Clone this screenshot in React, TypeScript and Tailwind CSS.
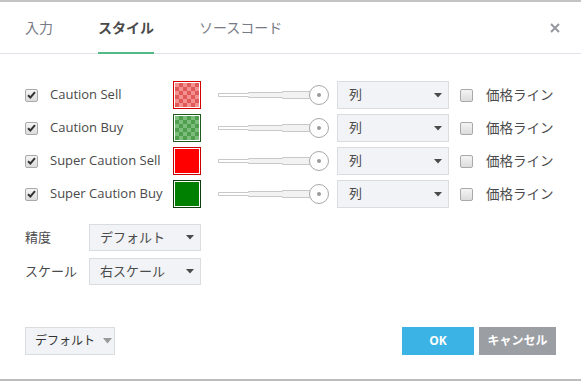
const rows = [
  { name: "Caution Sell", swatch: "border-[#d40000] bg-[repeating-conic-gradient(#e05a5a_0_25%,#f59090_0_50%)] bg-[length:8px_8px]" },
  { name: "Caution Buy", swatch: "border-[#1d5c1d] bg-[repeating-conic-gradient(#4f9f4f_0_25%,#7cbc7c_0_50%)] bg-[length:8px_8px]" },
  { name: "Super Caution Sell", swatch: "border-[#c80000] bg-[#ff0000]" },
  { name: "Super Caution Buy", swatch: "border-[#0d3d0d] bg-[#008000]" },
];

const Check = ({ on }: { on?: boolean }) => (
  <div className="w-[13px] h-[13px] rounded-[2px] border border-[#a9a9a9] bg-gradient-to-b from-[#f4f4f4] to-[#dcdcdc] flex items-center justify-center">
    {on && (
      <svg width="9" height="8" viewBox="0 0 9 8">
        <path d="M1 4.2 L3.4 6.5 L8 1.2" fill="none" stroke="#333" strokeWidth="2" />
      </svg>
    )}
  </div>
);

const Caret = () => (
  <svg width="8" height="5" viewBox="0 0 8 5">
    <path d="M0 0 H8 L4 4.5 Z" fill="#4a4a4a" />
  </svg>
);

const Slider = () => (
  <svg width="112" height="24" viewBox="0 0 112 24">
    <path
      d="M0.5 10.5 H30.5 V9.5 H64.5 V8.5 H92 M0.5 13.5 H30.5 V14.5 H64.5 V15.5 H92 M0.5 10.5 V13.5"
      fill="none"
      stroke="#c8c8c8"
    />
    <rect x="31" y="10" width="34" height="4" fill="#f2f2f2" />
    <rect x="65" y="9" width="28" height="6" fill="#f2f2f2" />
    <circle cx="101" cy="12" r="9.5" fill="#fff" stroke="#a8a8a8" />
    <circle cx="101" cy="12" r="2" fill="#9a9a9a" />
  </svg>
);

export default function App() {
  return (
    <div className="w-[581px] h-[382px] bg-white border-t-2 border-[#c4c4c4] flex flex-col font-['Open_Sans','Noto_Sans_CJK_JP',sans-serif] text-[#4a4a4a] text-[13px] overflow-hidden">
      <div className="h-[52px] border-b border-[#e0e3eb] flex items-end pl-[25px] pr-[21px] shrink-0">
        <div className="flex items-end gap-[45px] h-full">
          <div className="h-full flex items-center text-[14px] text-[#787b86]">入力</div>
          <div className="h-full flex items-center text-[14px] font-bold text-[#4a4a4a] border-b-2 border-[#53b987] translate-y-[1px]">スタイル</div>
          <div className="h-full flex items-center text-[14px] text-[#787b86]">ソースコード</div>
        </div>
        <div className="ml-auto h-full flex items-center">
          <svg width="10" height="10" viewBox="0 0 10 10">
            <path d="M1 1 L9 9 M9 1 L1 9" stroke="#9598a1" strokeWidth="2" />
          </svg>
        </div>
      </div>

      <div className="flex flex-col gap-[5px] pt-[27px] pl-[25px]">
        {rows.map((r) => (
          <div key={r.name} className="flex items-center h-[28px]">
            <Check on />
            <div className="ml-[12px] w-[123px]">{r.name}</div>
            <div className={`w-[28px] h-[28px] border p-[1px] bg-white ${r.swatch.split(" ")[0]}`}>
              <div className={`w-full h-full ${r.swatch}`} />
            </div>
            <div className="ml-[17px]">
              <Slider />
            </div>
            <div className="ml-[7px] w-[112px] h-[28px] bg-[#f1f3f6] border border-[#dadde0] flex items-center pl-[11px] pr-[6px]">
              <span>列</span>
              <span className="ml-auto"><Caret /></span>
            </div>
            <div className="ml-[11px]"><Check /></div>
            <div className="ml-[13px] text-[13.5px]">価格ライン</div>
          </div>
        ))}
      </div>

      <div className="flex flex-col gap-[7px] pt-[16px] pl-[25px]">
        <div className="flex items-center h-[27px]">
          <div className="w-[64px]">精度</div>
          <div className="w-[112px] h-[27px] bg-[#f1f3f6] border border-[#dadde0] flex items-center pl-[10px] pr-[6px]">
            <span>デフォルト</span>
            <span className="ml-auto"><Caret /></span>
          </div>
        </div>
        <div className="flex items-center h-[27px]">
          <div className="w-[64px]">スケール</div>
          <div className="w-[112px] h-[27px] bg-[#f1f3f6] border border-[#dadde0] flex items-center pl-[10px] pr-[6px]">
            <span>右スケール</span>
            <span className="ml-auto"><Caret /></span>
          </div>
        </div>
      </div>

      <div className="flex items-center mt-auto mb-[24px] px-[25px] h-[28px]">
        <div className="w-[90px] h-[28px] bg-[#f1f3f6] border border-[#dadde0] flex items-center pl-[9px] gap-[8px] text-[12px] text-[#333]">
          <span>デフォルト</span>
          <svg width="9" height="6" viewBox="0 0 9 6">
            <path d="M0 0 H9 L4.5 5.5 Z" fill="#9a9a9a" />
          </svg>
        </div>
        <div className="ml-auto flex gap-[5px]">
          <div className="w-[72px] h-[28px] bg-[#3bb3e4] text-white font-bold text-[12px] flex items-center justify-center">OK</div>
          <div className="w-[77px] h-[28px] bg-[#9b9ea3] text-white font-bold text-[12px] flex items-center justify-center">キャンセル</div>
        </div>
      </div>
      <div className="h-[3px] border-t-2 border-[#bdbdbd] shrink-0" />
    </div>
  );
}
